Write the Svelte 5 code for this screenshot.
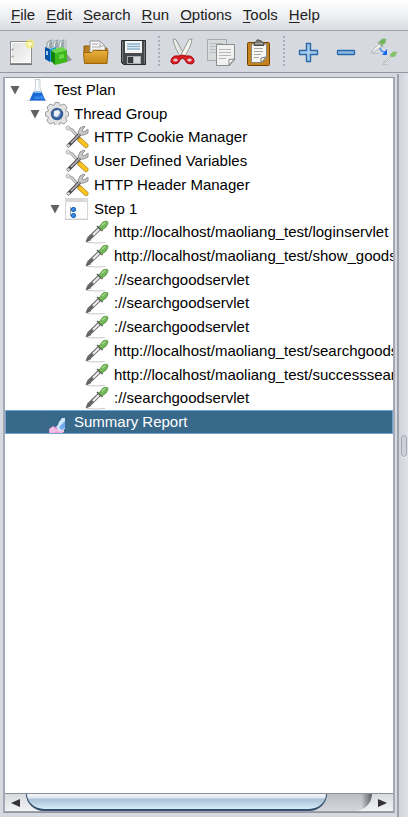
<script>
  const menus = ['File', 'Edit', 'Search', 'Run', 'Options', 'Tools', 'Help'];
  const groups = [
    ['New', 'Templates', 'Open', 'Save'],
    ['Cut', 'Copy', 'Paste'],
    ['Expand All', 'Collapse All', 'Toggle']
  ];
  const host = 'http://localhost/maoliang_test/';
  const nodes = [
    { label: 'Test Plan', level: 0, icon: 'flask', open: true },
    { label: 'Thread Group', level: 1, icon: 'gear', open: true },
    { label: 'HTTP Cookie Manager', level: 2, icon: 'tools' },
    { label: 'User Defined Variables', level: 2, icon: 'tools' },
    { label: 'HTTP Header Manager', level: 2, icon: 'tools' },
    { label: 'Step 1', level: 2, icon: 'controller', open: true },
    { label: host + 'loginservlet', level: 3, icon: 'dropper' },
    { label: host + 'show_goods.', level: 3, icon: 'dropper' },
    { label: '://searchgoodservlet', level: 3, icon: 'dropper' },
    { label: '://searchgoodservlet', level: 3, icon: 'dropper' },
    { label: '://searchgoodservlet', level: 3, icon: 'dropper' },
    { label: host + 'searchgoodservlet', level: 3, icon: 'dropper' },
    { label: host + 'successsearch', level: 3, icon: 'dropper' },
    { label: '://searchgoodservlet', level: 3, icon: 'dropper' },
    { label: 'Summary Report', level: 1, icon: 'report' }
  ];
  let selected = $state(14);
</script>

{#snippet toolIcon(name)}
  <svg viewBox="0 0 28 28" width="28" height="28" aria-hidden="true">
    {#if name === 'New'}
      <rect x="4.5" y="3.5" width="21" height="22" fill="url(#paper)" stroke="#8b8d8a" />
      <rect x="5.500" y="4.500" width="19" height="20" fill="none" stroke="#fff" />
      <path d="M4 26.500h22" stroke="#777" />
      <path d="M5.5 11.5h2M5.5 18.5h2" stroke="#999" stroke-width="1.5" />
      <circle cx="24" cy="6" r="4.500" fill="#f5ec5c" opacity=".65" />
      <circle cx="24" cy="6" r="2.200" fill="#fffbc0" />
    {:else if name === 'Templates'}
      <path d="M2 4l5-3 4 2 3-2 4 2 3-2 2 2v10H2z" fill="#c3cace" />
      <path d="M3 10V6q1-4 5-4-3 2-3 8M9 10V6q1-4 5-4-3 2-3 8M15 10V6q1-4 5-4-3 2-3 8" fill="#eef2f4" stroke="#93a0a6" />
      <path d="M7 4v6M13 4v6M19 4v7" stroke="#758890" />
      <path d="M1 9l5 2v13l-5-3z" fill="#0754a7" />
      <path d="M6 11l6-2v14l-6 1z" fill="#179be4" />
      <path d="M3 13v4M7.500 14l3-.5" stroke="#d9f2ff" stroke-width="1.500" />
      <path d="M23 24l5-2-5-6z" fill="#66706e" opacity=".6" />
      <path d="M7 12l4 3v12l-4-4z" fill="#13820c" />
      <path d="M11 15l12-3v12l-12 3z" fill="#3cb81c" />
      <path d="M7 12l11-3 5 3-12 3z" fill="#69d746" />
      <path d="M15 17l5-1v4l-5 1z" fill="#68db42" />
    {:else if name === 'Open'}
      <path d="M2 15V8h7l1 2h15v7z" fill="#b77f1f" stroke="#925b05" />
      <path d="M8 15V3h10l5 5v8z" fill="#f7f7f7" stroke="#92969a" />
      <path d="M18 3v5h5M10 6h6M10 9h9M10 12h11" fill="none" stroke="#aaa" />
      <path d="M1.500 14.500h8l2-2h14.500l-1 13H2.500z" fill="url(#folder)" stroke="#9b6508" />
    {:else if name === 'Save'}
      <path d="M1.500 2.500h24v24H3.500l-2-2z" fill="#44484b" stroke="#292d30" />
      <path d="M2.500 3.500v20M24.500 3.500v22" stroke="#777c80" />
      <path d="M5 3h17v12H5z" fill="#f4f6f6" />
      <path d="M7 6h13M7 8.500h13M7 11h13" stroke="#87b1ce" stroke-width="1.300" />
      <path d="M7 18h14v8H7z" fill="#a9adae" />
      <path d="M8 19h5v6H8z" fill="#373b3d" />
      <path d="M14 19h6v6h-6z" fill="#d7dada" />
    {:else if name === 'Cut'}
      <path d="M4 1l3 .5 9 17-3 2Q5 10 4 1z" fill="#e9eae4" stroke="#989a94" />
      <path d="M23 1l-3 .5-9 17 3 2Q22 10 23 1z" fill="#f4f4ef" stroke="#989a94" />
      <path d="M10 18q-5-1-7 2-3 5 2 6 5 0 6-4l2.500-2 2.500 2q1 4 6 4 5-1 2-6-2-3-7-2l-3.500-1z" fill="#d91e22" stroke="#a90c12" />
      <ellipse cx="6.500" cy="22" rx="2.300" ry="1.500" fill="#e5c8cd" />
      <ellipse cx="20.500" cy="22" rx="2.300" ry="1.500" fill="#e5c8cd" />
    {:else if name === 'Copy'}
      <path d="M.5 1.500h19v21H.5z" fill="#d8dbdc" stroke="#a7abac" />
      <path d="M3 5.500h13M3 8.500h13M3 11.500h6M3 14.500h6" stroke="#b9bcbd" />
      <path d="M9.500 6.500h18V22l-5 5.500h-13z" fill="#f1f2f1" stroke="#8a8d8a" />
      <path d="M12 11.500h12M12 14.500h12M12 17.500h12M12 20.500h7" stroke="#b6b9b7" />
      <path d="M27 21l-5 .5v5.500z" fill="#fff" stroke="#858886" />
    {:else if name === 'Paste'}
      <rect x="2.500" y="4.500" width="22" height="23" rx="1" fill="#c4831d" stroke="#714306" />
      <path d="M6.500 6h15v14l-5 4.500h-10z" fill="#f6f6f4" stroke="#858783" />
      <path d="M9 10.500h9M9 13.500h9M9 16.500h7M9 19.500h5" stroke="#a5a7a4" />
      <path d="M21 19l-5 1v5z" fill="#fff" stroke="#777" />
      <path d="M9 7.500q0-3 2-4 1-3 4-1l2 1q2 1 2 4z" fill="#777a75" stroke="#484b47" />
      <path d="M10 5.500h8" stroke="#a8aba6" />
    {:else if name === 'Expand All'}
      <path d="M12.500 5.500h4v7h7v4h-7v7h-4v-7h-7v-4h7z" fill="#a9cbea" stroke="#2869aa" stroke-width="1.400" stroke-linejoin="round" />
    {:else if name === 'Collapse All'}
      <rect x="5.500" y="12.500" width="17" height="4" rx=".5" fill="#8db9e2" stroke="#2869aa" stroke-width="1.300" />
    {:else}
      <path d="M1 15.500h9M12 26.500h6" stroke="#b5babd" opacity=".7" />
      <path d="M1 14l9-9 3 2-9 7z" fill="#f1f3f2" stroke="#b6bbb9" />
      <path d="M8 4l5 5" stroke="#a0aaa3" stroke-width="1.500" />
      <path d="M9 4l3-3h4l-1 4-3 2z" fill="#73b65a" stroke="#8fbf80" />
      <path d="M13 25l7-7 2 1-8 6z" fill="#eef0f0" stroke="#b9bdbb" />
      <path d="M20 17l3-3h4l-2 4-3 1z" fill="#7fc568" stroke="#92c184" />
      <path d="M10 10q1 4 5 4" fill="none" stroke="#4c91f2" stroke-width="1.500" />
      <path d="M17 11v6h-5z" fill="#1269ec" />
    {/if}
  </svg>
{/snippet}

{#snippet nodeIcon(name)}
  <svg viewBox="0 0 24 24" width="24" height="24" aria-hidden="true">
    {#if name === 'flask'}
      <path d="M2 22.500h20" stroke="#b7bcc1" opacity=".6" />
      <path d="M9.500 1.500h6M10.500 2v8L5 22.500h15L15 10V2" fill="#edf2f6" stroke="#cad0d5" />
      <path d="M12 3v9" stroke="#fff" stroke-width="2" />
      <path d="M8.500 14L4.500 22.500h16L16.500 14q-4 2-8 0z" fill="#1b68d4" />
      <path d="M8.500 14q4-2 8 0-4 2-8 0z" fill="#78b7f2" />
      <path d="M10 18q4 2 7-1l2 4H9z" fill="#3689e8" />
    {:else if name === 'gear'}
      <path d="M10 .5h4l1 3 4-1.500 3 3L20.500 9l3 1v4l-3 1 1.500 4-3 3-4-1.500-1 3h-4l-1-3L5 22l-3-3 1.500-4-3-1v-4l3-1L2 5l3-3 4 1.500z" fill="#e2e2e2" stroke="#a0a0a0" stroke-linejoin="round" />
      <circle cx="12" cy="12" r="5" fill="#7698c4" stroke="#3b6297" stroke-width="2.500" />
      <path d="M9 9l5-1 1 3-3 4-3-1z" fill="#edf2f8" />
      <path d="M8 15q2 3 7 1l2-4" fill="none" stroke="#315f9c" stroke-width="2" />
    {:else if name === 'tools'}
      <path d="M3 3l4 2 9 10" fill="none" stroke="#8f8f8f" stroke-width="3" />
      <path d="M3 3l4 2 8 9" fill="none" stroke="#ddd" stroke-width="1.400" />
      <circle cx="3" cy="3" r="2" fill="#e0e0e0" stroke="#bbb" />
      <path d="M15 15l6 5.500" stroke="#b78720" stroke-width="5" stroke-linecap="round" />
      <path d="M15 15l6 5.500" stroke="#fac51e" stroke-width="3.500" stroke-linecap="round" />
      <path d="M3.500 20.500L16 8" stroke="#4b4b4b" stroke-width="3.800" stroke-linecap="round" />
      <path d="M6 18L16 8" stroke="#c5c5c5" stroke-width="1.300" />
      <path d="M13 8l2-5 4-2 1 1-3 3 2 2 3-2 1-1v4l-4 2h-4z" fill="#c8c8c8" stroke="#929292" />
      <circle cx="3.500" cy="20.500" r="1.300" fill="#eee" />
    {:else if name === 'controller'}
      <rect x=".5" y="1.500" width="22" height="21" fill="#fdfdfd" stroke="#d6d6d6" />
      <path d="M0 1h23v4H0z" fill="#d8d8d8" />
      <path d="M19 3h3" stroke="#eee" />
      <path d="M0 22.500h23" stroke="#cbcbcb" stroke-width="1.500" />
      <path d="M5.500 10v9h3M5.500 13h3" fill="none" stroke="#999" />
      <rect x="6.500" y="10.500" width="4" height="4" rx="1.500" fill="#3989e6" stroke="#1e66bc" />
      <rect x="6.500" y="16.500" width="4" height="4" rx="1.500" fill="#3989e6" stroke="#1e66bc" />
    {:else if name === 'dropper'}
      <path d="M2 22.500q9 1 18 0" fill="none" stroke="#c9c9c9" />
      <path d="M1 22l1.500-4 3 2z" fill="#555" stroke="#777" />
      <path d="M3.500 19L15 8" stroke="#666" stroke-width="4" />
      <path d="M8 15l6-6" stroke="#eee" stroke-width="2.200" />
      <path d="M12 6l5.500 5" stroke="#52604f" stroke-width="1.600" />
      <path d="M14 7l4-5q5-2 5 1-.5 4-6 7z" fill="#76b85c" stroke="#5f9c4b" />
      <path d="M17 5l3-2.500" stroke="#a8db91" stroke-width="1.500" />
    {:else}
      <path d="M4 23v-4l4-3 4 2 6-4v9z" fill="#f29bd0" />
      <path d="M5 19l3-2 3 3 4-2 4 2v2l-4 1-3-2-4 2-3-1z" fill="#f0c3e6" />
      <path d="M11 17q2-1 3-5l3-4h3v11l-5 2z" fill="#d2e8fd" />
      <path d="M14 17l4-4 2-2v7l-4 2z" fill="#6facea" />
    {/if}
  </svg>
{/snippet}

<div class="app">
  <svg class="defs" width="0" height="0" aria-hidden="true">
    <defs>
      <linearGradient id="paper" x1="0" y1="0" x2="1" y2="1"><stop stop-color="#dedede" /><stop offset="1" stop-color="#fafafa" /></linearGradient>
      <linearGradient id="folder" x1="0" y1="0" x2="0" y2="1"><stop stop-color="#e9b13e" /><stop offset="1" stop-color="#c58518" /></linearGradient>
    </defs>
  </svg>

  <nav class="menubar" aria-label="Main menu">
    {#each menus as menu}
      <button><span>{menu[0]}</span>{menu.slice(1)}</button>
    {/each}
  </nav>

  <div class="toolbar" role="toolbar" aria-label="Tools">
    {#each groups as group, i}
      {#if i > 0}<span class="separator"></span>{/if}
      {#each group as name}
        <button aria-label={name}>{@render toolIcon(name)}</button>
      {/each}
    {/each}
  </div>

  <main>
    <section class="pane">
      <ul class="tree" role="tree" aria-label="Test plan">
        {#each nodes as node, i}
          <li
            class={['row', `level${node.level}`, selected === i && 'selected']}
            role="treeitem"
            aria-level={node.level + 1}
            aria-selected={selected === i}
            aria-expanded={node.open}
          >
            <span class="twist">
              {#if node.open}
                <svg viewBox="0 0 10 10" width="10" height="10" aria-hidden="true"><path d="M.5 1h9L5 9.500z" fill="#606266" /></svg>
              {/if}
            </span>
            <button class="node" onclick={() => (selected = i)}>
              {@render nodeIcon(node.icon)}
              <span>{node.label}</span>
            </button>
          </li>
        {/each}
      </ul>
      <div class="scrollbar">
        <button aria-label="Scroll left"><svg viewBox="0 0 9 8" width="9" height="8"><path d="M9 0v8L0 4z" fill="#333" /></svg></button>
        <div class="track"><div class="thumb"></div></div>
        <button aria-label="Scroll right"><svg viewBox="0 0 9 8" width="9" height="8"><path d="M0 0v8l9-4z" fill="#333" /></svg></button>
      </div>
    </section>
    <div class="divider"><span class="grip"></span></div>
  </main>
</div>

<style>
  :global(body) {
    margin: 0;
  }
  .app {
    display: flex;
    flex-direction: column;
    height: 100vh;
    overflow: hidden;
    background: #d6d9df;
    color: #000;
    font: 15px/20px "Liberation Sans", Arial, sans-serif;
  }
  .defs {
    position: absolute;
  }
  button {
    margin: 0;
    padding: 0;
    border: 0;
    background: none;
    color: inherit;
    font: inherit;
  }
  .menubar {
    display: flex;
    flex: none;
    gap: 11px;
    height: 30px;
    padding-left: 11px;
    border-bottom: 1px solid #9ba0aa;
    background: linear-gradient(#fff, #eff0f3 50%, #d8dbe1);
    color: #222;
  }
  .menubar span {
    text-decoration: underline;
    text-underline-offset: 2px;
  }
  .toolbar {
    display: flex;
    flex: none;
    align-items: center;
    height: 41px;
    padding-left: 1px;
    border-bottom: 1px solid #9297a1;
  }
  .toolbar button {
    display: grid;
    flex: none;
    place-items: center;
    width: 38px;
    height: 38px;
  }
  .separator {
    flex: none;
    width: 11px;
    height: 32px;
    background: linear-gradient(#a9aeb8 2px, transparent 2px) center top / 2px 4px repeat-y;
  }
  main {
    display: flex;
    flex: 1;
    min-height: 0;
  }
  .pane {
    display: flex;
    flex: 1;
    flex-direction: column;
    min-width: 0;
    margin: 4px 2px 4px 3px;
    border: 1px solid #8f949e;
    border-width: 1px 2px;
    border-color: #8f949e #a4a9b5;
    background: #fff;
  }
  .tree {
    display: grid;
    grid-auto-rows: 1fr;
    height: 356px;
    margin: 0 0 auto;
    padding: 0;
    overflow: hidden;
    list-style: none;
  }
  .row {
    display: flex;
    align-items: center;
    min-width: 0;
    min-height: 0;
    overflow: hidden;
    white-space: nowrap;
  }
  .level1 {
    padding-left: 20px;
  }
  .level2 {
    padding-left: 40px;
  }
  .level3 {
    padding-left: 60px;
  }
  .twist {
    display: grid;
    flex: none;
    place-items: center;
    width: 19px;
  }
  .node {
    display: flex;
    flex: none;
    align-items: center;
    gap: 5px;
    padding-left: 1px;
  }
  .node svg {
    flex: none;
  }
  .selected {
    background:
      repeating-linear-gradient(#4f6c7f 0 2px, transparent 2px 4px) 41px 0 / 1px 100% no-repeat,
      #39698a;
    box-shadow: inset 0 0 0 1px #73a4d1;
    color: #fff;
  }
  .scrollbar {
    display: flex;
    flex: none;
    height: 17px;
    border-top: 1px solid #8b8f97;
    border-bottom: 1px solid #9da2ab;
    background: linear-gradient(#d8dade, #f1f2f4);
  }
  .scrollbar button {
    display: grid;
    flex: none;
    place-items: center;
    width: 21px;
  }
  .track {
    flex: 1;
    border-radius: 0 0 18px 18px / 0 0 17px 17px;
    background: linear-gradient(90deg, transparent 97%, #5c5f65), linear-gradient(#babdc2, #d5d7dc);
  }
  .thumb {
    box-sizing: border-box;
    width: 87%;
    height: 100%;
    border: 1px solid #32506d;
    border-width: 0 1px 2px;
    border-radius: 0 0 18px 18px / 0 0 17px 17px;
    background: linear-gradient(#f3f6fa, #dce5ee 28%, #a9c0d6 32%, #b9d0e2 60%, #d7edf9);
  }
  .divider {
    display: grid;
    flex: none;
    place-items: center;
    width: 9px;
    margin-top: 1px;
    border-left: 2px solid #9da2ad;
    background: linear-gradient(90deg, #d0d3d9, #dfe2e8);
  }
  .grip {
    width: 4px;
    height: 20px;
    border: 1px solid #a3a7af;
    border-radius: 3px;
    background: #cdd0d6;
    box-shadow: 0 1px #f5f6f8;
  }
</style>
